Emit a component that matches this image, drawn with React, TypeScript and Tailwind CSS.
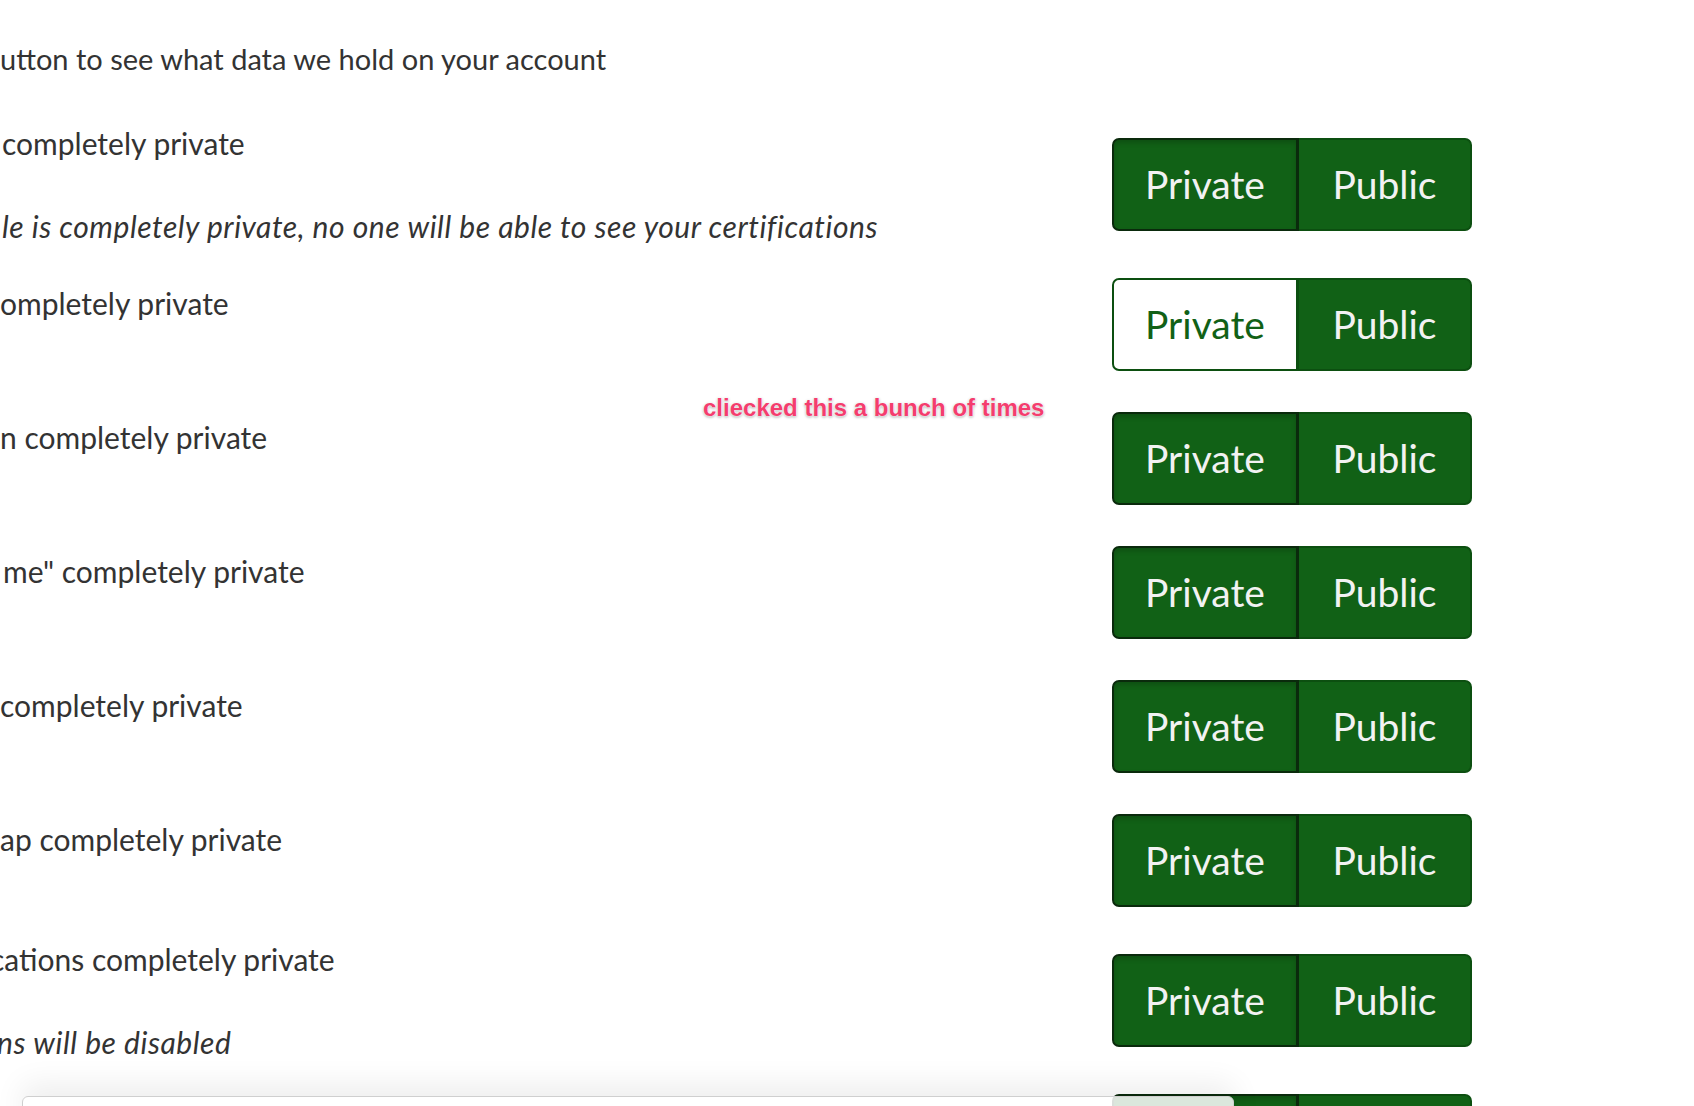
type Row = {
  label: string;
  note?: string;
  indent?: string;
  noteIndent?: string;
  choice: "private" | "public";
};

const rows: Row[] = [
  {
    label: "completely private",
    note: "le is completely private, no one will be able to see your certifications",
    indent: "pl-[2px]",
    choice: "private",
  },
  { label: "ompletely private", choice: "public" },
  { label: "n completely private", choice: "private" },
  { label: 'me" completely private', indent: "pl-[3px]", choice: "private" },
  { label: "completely private", choice: "private" },
  { label: "ap completely private", choice: "private" },
  {
    label: "cations completely private",
    note: "ns will be disabled",
    indent: "-ml-[10px]",
    noteIndent: "pl-[7px]",
    choice: "private",
  },
  { label: "", choice: "private" },
];

function Toggle({ choice }: { choice: "private" | "public" }) {
  const isPrivate = choice === "private";
  return (
    <div className="flex h-[93px] w-[360px] shrink-0 text-[39px]">
      <button
        className={
          isPrivate
            ? "w-[187px] h-full rounded-l-[7px] border-2 border-r-[3px] border-[#0a2a0c] bg-[#116116] text-[#f2f2f2] shadow-[inset_0_3px_5px_rgba(0,0,0,0.18)]"
            : "w-[187px] h-full rounded-l-[7px] border-2 border-r-[3px] border-[#0c4f10] bg-white text-[#116116]"
        }
      >
        Private
      </button>
      <button className="w-[173px] h-full rounded-r-[7px] border-2 border-l-0 border-[#0c4f10] bg-[#116116] text-[#f2f2f2]">
        Public
      </button>
    </div>
  );
}

export default function App() {
  return (
    <div className="relative h-[1106px] w-full overflow-hidden bg-white font-['Lato','Noto_Sans',sans-serif] text-[30px] text-[#333]">
      <p className="pt-[34px] text-[29px] leading-[50px]">
        utton to see what data we hold on your account
      </p>

      <div className="mt-[48px] flex flex-col gap-[41px]">
        {rows.map((row, i) => (
          <div key={i} className="flex items-center pr-[222px]">
            {row.note ? (
              <div className={"flex h-[105px] flex-1 flex-col " + (row.indent ?? "")}>
                <p className="leading-[22px]">{row.label}</p>
                <p className={"mt-[61px] italic leading-[22px] tracking-[0.55px] " + (row.noteIndent ?? "")}>
                  {row.note}
                </p>
              </div>
            ) : (
              <div className={"flex-1 self-start leading-[50px] " + (row.indent ?? "")}>
                {row.label}
              </div>
            )}
            <Toggle choice={row.choice} />
          </div>
        ))}
      </div>

      <span className="absolute left-[703px] top-[390px] font-['Liberation_Sans',Arial,sans-serif] text-[24px] leading-[36px] font-bold text-[#f43d6e] [text-shadow:0_0_2px_#fff,0_0_2px_#fff,0_1px_3px_rgba(0,0,0,0.45)]">
        cliecked this a bunch of times
      </span>

      <div className="absolute left-[22px] top-[1096px] h-[40px] w-[1212px] rounded-[6px] border border-[#cfcfcf] bg-white/85 shadow-[0_-12px_30px_rgba(0,0,0,0.07)]" />
    </div>
  );
}
